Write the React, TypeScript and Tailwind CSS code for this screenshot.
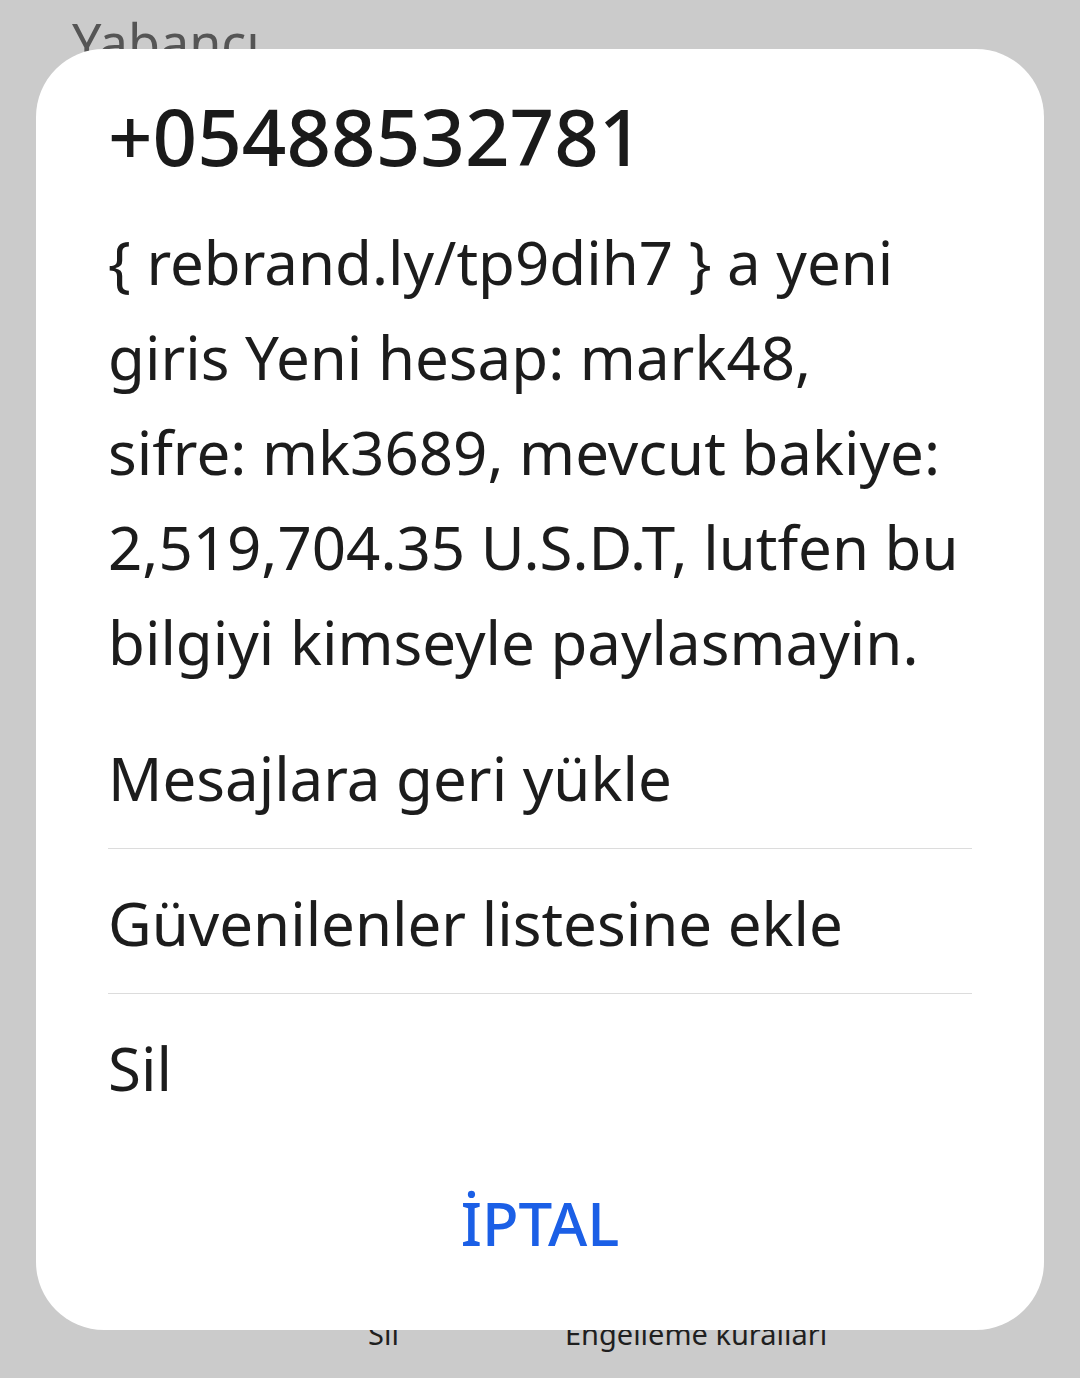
import React from "react";

const font = { fontFamily: '"Noto Sans", "Open Sans", sans-serif' };

export default function App() {
  const body = [
    "{ rebrand.ly/tp9dih7 } a yeni",
    "giris Yeni hesap: mark48,",
    "sifre: mk3689, mevcut bakiye:",
    "2,519,704.35 U.S.D.T, lutfen bu",
    "bilgiyi kimseyle paylasmayin.",
  ];
  const items = ["Mesajlara geri yükle", "Güvenilenler listesine ekle", "Sil"];
  return (
    <div
      className="relative flex h-[1378px] w-[1080px] flex-col justify-between overflow-hidden bg-[#cbcbcb]"
      style={font}
    >
      <div className="pl-[72px] pt-[12px] text-[52px] leading-[60px] text-[#555555]">Yabancı</div>
      <div className="flex pb-[25px] pl-[368px] text-[29px] leading-[38px] text-[#1f1f1f]">
        <span>Sil</span>
        <span className="ml-[166px]">Engelleme kuralları</span>
      </div>

      <div className="absolute left-[36px] top-[49px] flex h-[1281px] w-[1008px] flex-col rounded-[68px] bg-white px-[72px] pt-[37px]">
        <div className="whitespace-nowrap text-[78px] font-medium leading-[100px] text-[#1a1a1a]">
          +05488532781
        </div>
        <div className="mt-[29px] text-[60px] leading-[95px] text-[#1c1c1c]">
          {body.map((l) => (
            <div key={l} className="whitespace-nowrap">
              {l}
            </div>
          ))}
        </div>
        <div className="mt-[14px] flex flex-col">
          {items.map((t, i) => (
            <div
              key={t}
              className={
                i < 2
                  ? "border-b border-[#dcdcdc] pb-[22px] pt-[27px] text-[60px] leading-[95px] text-[#1c1c1c]"
                  : "pb-[22px] pt-[27px] text-[60px] leading-[95px] text-[#1c1c1c]"
              }
            >
              {t}
            </div>
          ))}
        </div>
        <div className="mt-[38px] text-center text-[60px] font-medium leading-[95px] text-[#1b5fe6]">
          İPTAL
        </div>
      </div>
    </div>
  );
}
